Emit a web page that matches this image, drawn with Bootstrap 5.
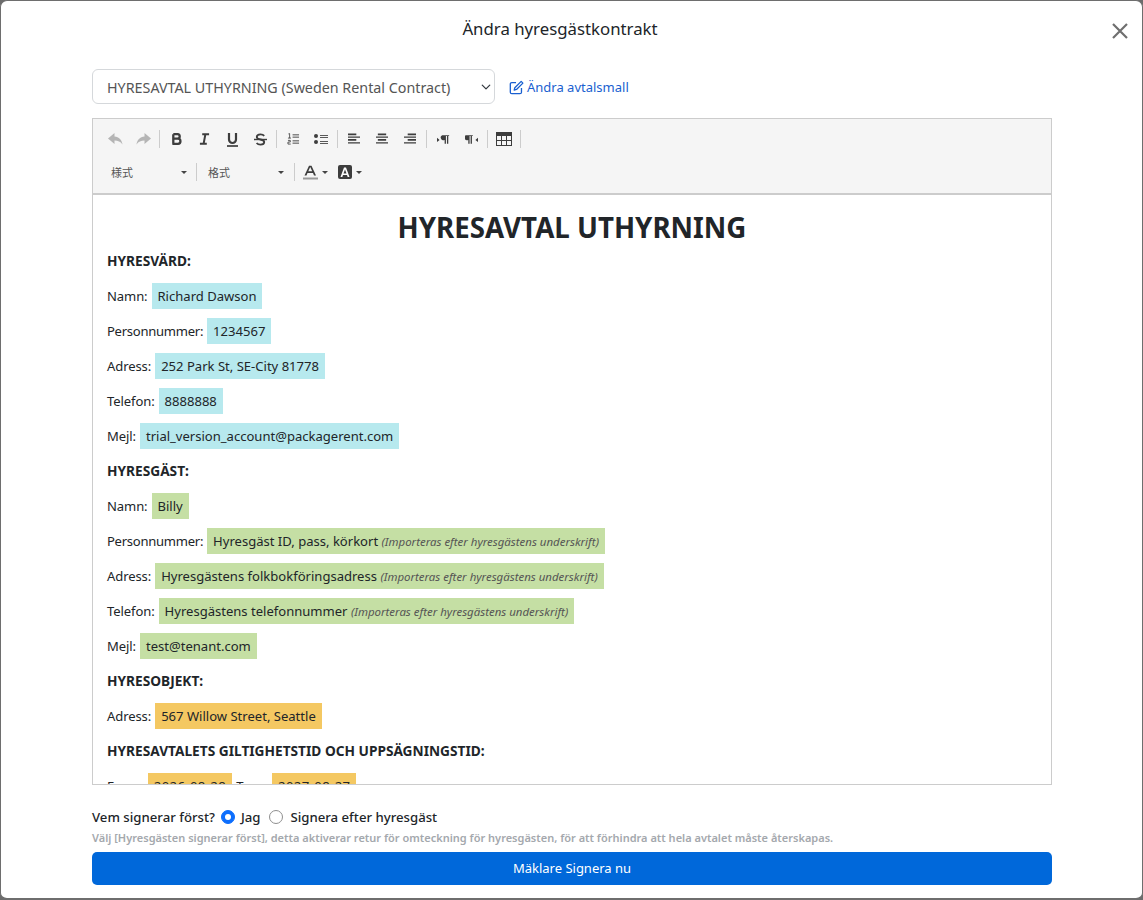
<!DOCTYPE html>
<html lang="sv">
<head>
<meta charset="utf-8">
<title>Ändra hyresgästkontrakt</title>
<link href="https://cdn.jsdelivr.net/npm/bootstrap@5.3.0/dist/css/bootstrap.min.css" rel="stylesheet">
<style>
html,body{height:100%;margin:0;overflow:hidden;background:#6c6c6c}
body{font-family:"Noto Sans","Open Sans",sans-serif;color:#212529}
.shell{height:900px;background:#fff;border:1px solid #6e6e6e;border-bottom-width:2px;border-radius:7px;position:relative;display:flex;flex-direction:column;padding:0 91px}
.shell-title{height:56px;line-height:56px;margin:0;text-align:center;font-size:16.800px;font-weight:400;padding-right:23px}
.shell-x{position:absolute;top:21px;right:13px;width:18px;height:18px;padding:0;border:0;background:none;display:block}
.shell-x svg{display:block}
.tpl-row{margin-top:12px;height:35px;margin-bottom:14px}
.tpl-select{width:403px;height:35px;font-size:14.300px;padding:2px 14px 0;color:#555;border-color:#d5d8db;border-radius:6px;background-position:right 3px center;background-size:10px 10px}
.tpl-link{font-size:13px;color:#1a5fd0;text-decoration:none;margin-left:14px;display:flex;align-items:center;gap:3px;padding-top:2px}
.ed{height:667px;width:960px;border:1px solid #ccc;display:flex;flex-direction:column;overflow:hidden}
.ed-bar{height:76px;flex:none;background:#f5f5f5;border-bottom:2px solid #ccc;padding:6px 8px 0}
.bar-line{height:28px;display:flex;align-items:center}
.bar-line + .bar-line{margin-top:5px}
.tb{width:28px;height:22px;display:flex;align-items:center;justify-content:center;color:#3d3d3d}
.tb svg{display:block}
.tb.off{color:#b5b5b5}
.vsep{width:1px;height:18px;background:#ccc;margin:0 2px;flex:none}
.combo{font-size:11px;color:#555;display:flex;align-items:center;justify-content:space-between;height:22px;font-family:"Noto Sans CJK JP","Noto Sans",sans-serif}
.combo.one{width:86px;padding:0 0 0 10px;margin-right:7px}
.combo.two{width:85px;padding:0 0 0 9px;margin-right:8px}
.color-a{margin-left:6px}
.color-b{margin-left:10px}
.caret-s{width:0;height:0;border-left:3px solid transparent;border-right:3px solid transparent;border-top:3px solid #444;display:inline-block}
.ed-body{flex:1;overflow:hidden;padding:14px 13px 0 14px;font-size:13.050px}
.doc-title{font-size:27.700px;font-weight:700;text-align:center;margin:0 0 0 -1px;line-height:36px;height:34px}
.ln{height:35px;line-height:30px;margin:0;white-space:nowrap;display:flex;align-items:center;gap:4px}
.ln.head{font-weight:700;font-size:13.700px}
.lbl{letter-spacing:-.1px}
.lbl-long{letter-spacing:-.27px}
.lbl-date{letter-spacing:-.55px}
.lbl-date.end{letter-spacing:-.85px}
.fld{display:inline-block;height:26px;line-height:26px;padding:0 6px}
.fld i{font-size:11.450px;color:#555}
.cy{background:#b7e9ee}.gr{background:#c5dfa4}.or{background:#f4c862}
.dt{letter-spacing:.42px}
.signrow{margin-top:22px;font-size:13.200px;font-weight:500;line-height:20px;display:flex;align-items:center;height:20px}
.signrow .form-check-input{width:14px;height:14px;margin:0 6px;flex:none;border-color:#8f8f8f}
.signrow .form-check-input.second{margin:0 7px 0 9px}
.signrow .form-check-input:checked{background-color:#0d6efd;border-color:#0d6efd}
.signnote{font-size:11px;font-weight:600;color:#a4a8ad;margin:3px 0 6px;line-height:16px;white-space:nowrap}
.sign-btn{width:960px;height:33px;background:#0068da;border:0;color:#fff;font-size:13px;border-radius:5px;padding:0}
</style>
</head>
<body>
<div class="shell">
  <h5 class="shell-title">Ändra hyresgästkontrakt</h5>
  <button class="shell-x" type="button" aria-label="Stäng">
    <svg width="18" height="18" viewBox="0 0 18 18"><path d="M2 2 16 16M16 2 2 16" stroke="#6f6f6f" stroke-width="2.200" fill="none"/></svg>
  </button>
  <div class="tpl-row d-flex align-items-center">
    <select class="form-select tpl-select"><option>HYRESAVTAL UTHYRNING (Sweden Rental Contract)</option></select>
    <a class="tpl-link" href="#">
      <svg width="15" height="15" viewBox="0 0 16 16" fill="none" stroke="#1a5fd0" stroke-width="1.400"><path d="M7.500 2.700H3a1.600 1.600 0 0 0-1.600 1.600V13A1.600 1.600 0 0 0 3 14.600h8.700a1.600 1.600 0 0 0 1.600-1.600V8.500"/><path d="M13 1.500 14.800 3.300 8 10.100 5.600 10.700 6.200 8.300Z" stroke-linejoin="round"/></svg>
      Ändra avtalsmall</a>
  </div>
  <div class="ed">
    <div class="ed-bar">
      <div class="bar-line">
        <span class="tb off"><svg width="15" height="12" viewBox="0 0 15 12" fill="currentColor"><path d="M6.500 0 0 5.500 6.500 11V7.500C10 7.500 12.500 8.500 14.500 11.500 14 7 11 3.800 6.500 3.500Z"/></svg></span>
        <span class="tb off"><svg width="15" height="12" viewBox="0 0 15 12" fill="currentColor"><path d="M8.500 0 15 5.500 8.500 11V7.500C5 7.500 2.500 8.500.5 11.500 1 7 4 3.800 8.500 3.500Z"/></svg></span>
        <span class="vsep"></span>
        <span class="tb"><svg width="11" height="12" viewBox="0 0 12 13" fill="none" stroke="currentColor" stroke-width="2.500"><path d="M2.500 1.200V11.800M2.500 1.200H7a2.400 2.400 0 0 1 0 5H2.500M2.500 6.200H7.500a2.800 2.800 0 0 1 0 5.600H1.500"/></svg></span>
        <span class="tb"><svg width="11" height="12" viewBox="0 0 12 13" fill="none" stroke="currentColor" stroke-width="2.200"><path d="M3.500 1.200H11M1 11.800H8.500M7 1.200 5 11.800"/></svg></span>
        <span class="tb"><svg width="13" height="15" viewBox="0 0 13 15" fill="none" stroke="currentColor" stroke-width="2.200"><path d="M3 1V7.500a3.500 3.500 0 0 0 7 0V1"/><path d="M1 14H12" stroke-width="1.700"/></svg></span>
        <span class="tb"><svg width="13" height="13" viewBox="0 0 14 13" fill="none" stroke="currentColor" stroke-width="2"><path d="M11 2.500C10 1.300 8.800 1 7 1 5 1 3 2 3 3.800 3 7.500 11 5.500 11 9.200 11 11 9 12 7 12 5 12 3.800 11.500 2.800 10.300"/><path d="M0 6.500H14" stroke-width="1.500"/></svg></span>
        <span class="vsep"></span>
        <span class="tb"><svg width="13" height="12" viewBox="0 0 14 13" fill="none" stroke="currentColor" stroke-width="1"><path d="M6 2H13M6 4.500H13M6 8.500H13M6 11H13"/><path d="M1.500 1 2.800.6V5.500M1 5.500H4.300M1 8H3.500V9.800H1V12H4" stroke-width=".9"/></svg></span>
        <span class="tb"><svg width="14" height="12" viewBox="0 0 14 12" fill="currentColor"><circle cx="2" cy="3" r="2"/><circle cx="2" cy="9" r="2"/><path d="M6 2H14V3H6ZM6 4H14V5H6ZM6 8H14V9H6ZM6 10H14V11H6Z" opacity=".85"/></svg></span>
        <span class="vsep"></span>
        <span class="tb"><svg width="12" height="12" viewBox="0 0 13 12" fill="currentColor"><path d="M0 0H9V2H0ZM0 3.300H13V4.600H0ZM0 6H9V8H0ZM0 9.500H13V11H0Z"/></svg></span>
        <span class="tb"><svg width="12" height="12" viewBox="0 0 13 12" fill="currentColor"><path d="M2 0H11V2H2ZM0 3.300H13V4.600H0ZM2 6H11V8H2ZM0 9.500H13V11H0Z"/></svg></span>
        <span class="tb"><svg width="12" height="12" viewBox="0 0 13 12" fill="currentColor"><path d="M4 0H13V2H4ZM0 3.300H13V4.600H0ZM4 6H13V8H4ZM0 9.500H13V11H0Z"/></svg></span>
        <span class="vsep"></span>
        <span class="tb"><svg width="13" height="11" viewBox="0 0 15 12" fill="currentColor"><path d="M0 4 3 6.500 0 9ZM6 1H14V2H13V11H11.500V2H10.300V11H8.800V6.500A3 3 0 0 1 6 1Z"/></svg></span>
        <span class="tb"><svg width="13" height="11" viewBox="0 0 15 12" fill="currentColor"><path d="M15 4 12 6.500 15 9ZM1 1H9V2H8V11H6.500V2H5.300V11H3.800V6.500A3 3 0 0 1 1 1Z"/></svg></span>
        <span class="vsep"></span>
        <span class="tb"><svg width="16" height="14" viewBox="0 0 16 14" fill="none" stroke="currentColor"><rect x=".5" y=".5" width="15" height="13"/><path d="M.5 2.500H15.500" stroke-width="3"/><path d="M.5 8.500H15.500M5.500 4V13.500M10.500 4V13.500"/></svg></span>
        <span class="vsep"></span>
      </div>
      <div class="bar-line">
        <span class="combo one">様式<span class="caret-s"></span></span>
        <span class="vsep"></span>
        <span class="combo two">格式<span class="caret-s"></span></span>
        <span class="vsep"></span>
        <span class="d-flex align-items-center gap-1 color-a">
          <svg width="15" height="15" viewBox="0 0 15 15"><path d="M1.500 10.500 6 .8H8.500L13 10.500H11L10 8H4.500L3.500 10.500ZM5.300 6.300H9.200L7.200 2Z" fill="#3d3d3d"/><rect y="12.500" width="15" height="2" fill="#999"/></svg>
          <span class="caret-s"></span>
        </span>
        <span class="d-flex align-items-center gap-1 color-b">
          <svg width="14" height="14" viewBox="0 0 14 14"><rect width="14" height="14" rx="2" fill="#3d3d3d"/><path d="M2.500 12 6 2.500H8L11.500 12H9.700L9 10H5L4.300 12ZM5.500 8.500H8.500L7 4.500Z" fill="#fff"/></svg>
          <span class="caret-s"></span>
        </span>
      </div>
    </div>
    <div class="ed-body">
      <h1 class="doc-title">HYRESAVTAL UTHYRNING</h1>
      <p class="ln head">HYRESVÄRD:</p>
      <p class="ln"><span class="lbl">Namn:</span> <span class="fld cy">Richard Dawson</span></p>
      <p class="ln"><span class="lbl-long">Personnummer:</span> <span class="fld cy">1234567</span></p>
      <p class="ln"><span class="lbl">Adress:</span> <span class="fld cy">252 Park St, SE-City 81778</span></p>
      <p class="ln"><span class="lbl">Telefon:</span> <span class="fld cy">8888888</span></p>
      <p class="ln"><span class="lbl">Mejl:</span> <span class="fld cy">trial_version_account@packagerent.com</span></p>
      <p class="ln head">HYRESGÄST:</p>
      <p class="ln"><span class="lbl">Namn:</span> <span class="fld gr">Billy</span></p>
      <p class="ln"><span class="lbl-long">Personnummer:</span> <span class="fld gr">Hyresgäst ID, pass, körkort <i>(Importeras efter hyresgästens underskrift)</i></span></p>
      <p class="ln"><span class="lbl">Adress:</span> <span class="fld gr">Hyresgästens folkbokföringsadress <i>(Importeras efter hyresgästens underskrift)</i></span></p>
      <p class="ln"><span class="lbl">Telefon:</span> <span class="fld gr">Hyresgästens telefonnummer <i>(Importeras efter hyresgästens underskrift)</i></span></p>
      <p class="ln"><span class="lbl">Mejl:</span> <span class="fld gr">test@tenant.com</span></p>
      <p class="ln head">HYRESOBJEKT:</p>
      <p class="ln"><span class="lbl">Adress:</span> <span class="fld or">567 Willow Street, Seattle</span></p>
      <p class="ln head">HYRESAVTALETS GILTIGHETSTID OCH UPPSÄGNINGSTID:</p>
      <p class="ln"><span class="lbl-date">Fr.o.m:</span> <span class="fld or dt">2026-08-28</span> <span class="lbl-date end">T.o.m:</span> <span class="fld or dt">2027-08-27</span></p>
    </div>
  </div>
  <div class="signrow">
    <span>Vem signerar först?</span>
    <input class="form-check-input" type="radio" name="signer" checked aria-label="Jag"><span>Jag</span>
    <input class="form-check-input second" type="radio" name="signer" aria-label="Signera efter hyresgäst"><span>Signera efter hyresgäst</span>
  </div>
  <p class="signnote">Välj [Hyresgästen signerar först], detta aktiverar retur för omteckning för hyresgästen, för att förhindra att hela avtalet måste återskapas.</p>
  <button class="btn btn-primary sign-btn" type="button">Mäklare Signera nu</button>
</div>
<script src="https://cdn.jsdelivr.net/npm/bootstrap@5.3.0/dist/js/bootstrap.bundle.min.js"></script>
</body>
</html>
